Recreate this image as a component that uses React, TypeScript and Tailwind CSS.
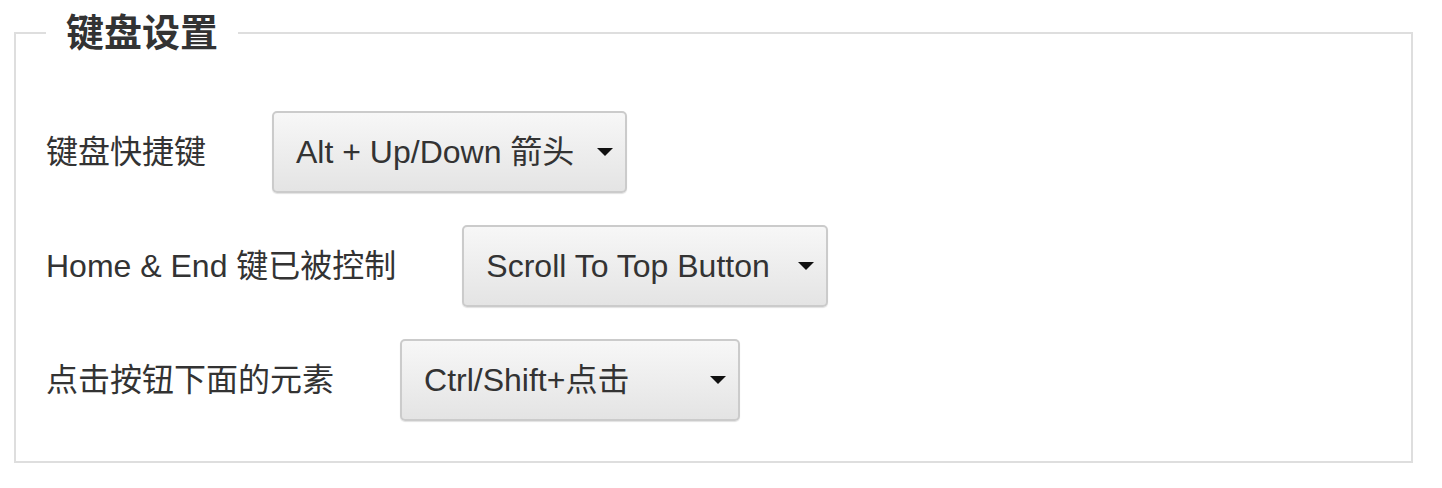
const FONT = '[font-family:"Liberation_Sans","Noto_Sans_CJK_SC",sans-serif]';

type Row = {
  label: string;
  value: string;
  width: string;
};

const ROWS: Row[] = [
  { label: '键盘快捷键', value: 'Alt + Up/Down 箭头', width: 'w-[355px]' },
  { label: 'Home & End 键已被控制', value: 'Scroll To Top Button', width: 'w-[366px]' },
  { label: '点击按钮下面的元素', value: 'Ctrl/Shift+点击', width: 'w-[340px]' },
];

function Caret() {
  return (
    <svg width="16" height="8" viewBox="0 0 16 8" className="shrink-0">
      <path d="M0 0 L16 0 L8 8 Z" fill="#111" />
    </svg>
  );
}

function FakeSelect({ value, width }: { value: string; width: string }) {
  return (
    <button
      type="button"
      className={`${width} h-[82px] flex items-center justify-between pl-[22px] pr-[12px] rounded-[5px] border-2 border-[#cbcbcb] bg-gradient-to-b from-[#f7f7f7] to-[#e4e4e4] shadow-[0_1px_1px_rgba(0,0,0,0.12)] text-[32px] text-[#333] leading-none`}
    >
      <span className="whitespace-nowrap">{value}</span>
      <Caret />
    </button>
  );
}

export default function App() {
  return (
    <div className={`${FONT} bg-white min-h-[488px] pt-[14px] pl-[14px]`}>
      <fieldset className="w-[1399px] border-2 border-[#dedede] pl-[30px] pt-[59px] pb-[40px]">
        <legend className="px-[20px] text-[38px] leading-[38px] font-bold text-[#333]">
          键盘设置
        </legend>
        <div className="flex flex-col gap-[32px]">
          {ROWS.map((row) => (
            <div key={row.label} className="flex items-center">
              <span className="mr-[66px] text-[32px] text-[#333] whitespace-nowrap">
                {row.label}
              </span>
              <FakeSelect value={row.value} width={row.width} />
            </div>
          ))}
        </div>
      </fieldset>
    </div>
  );
}
